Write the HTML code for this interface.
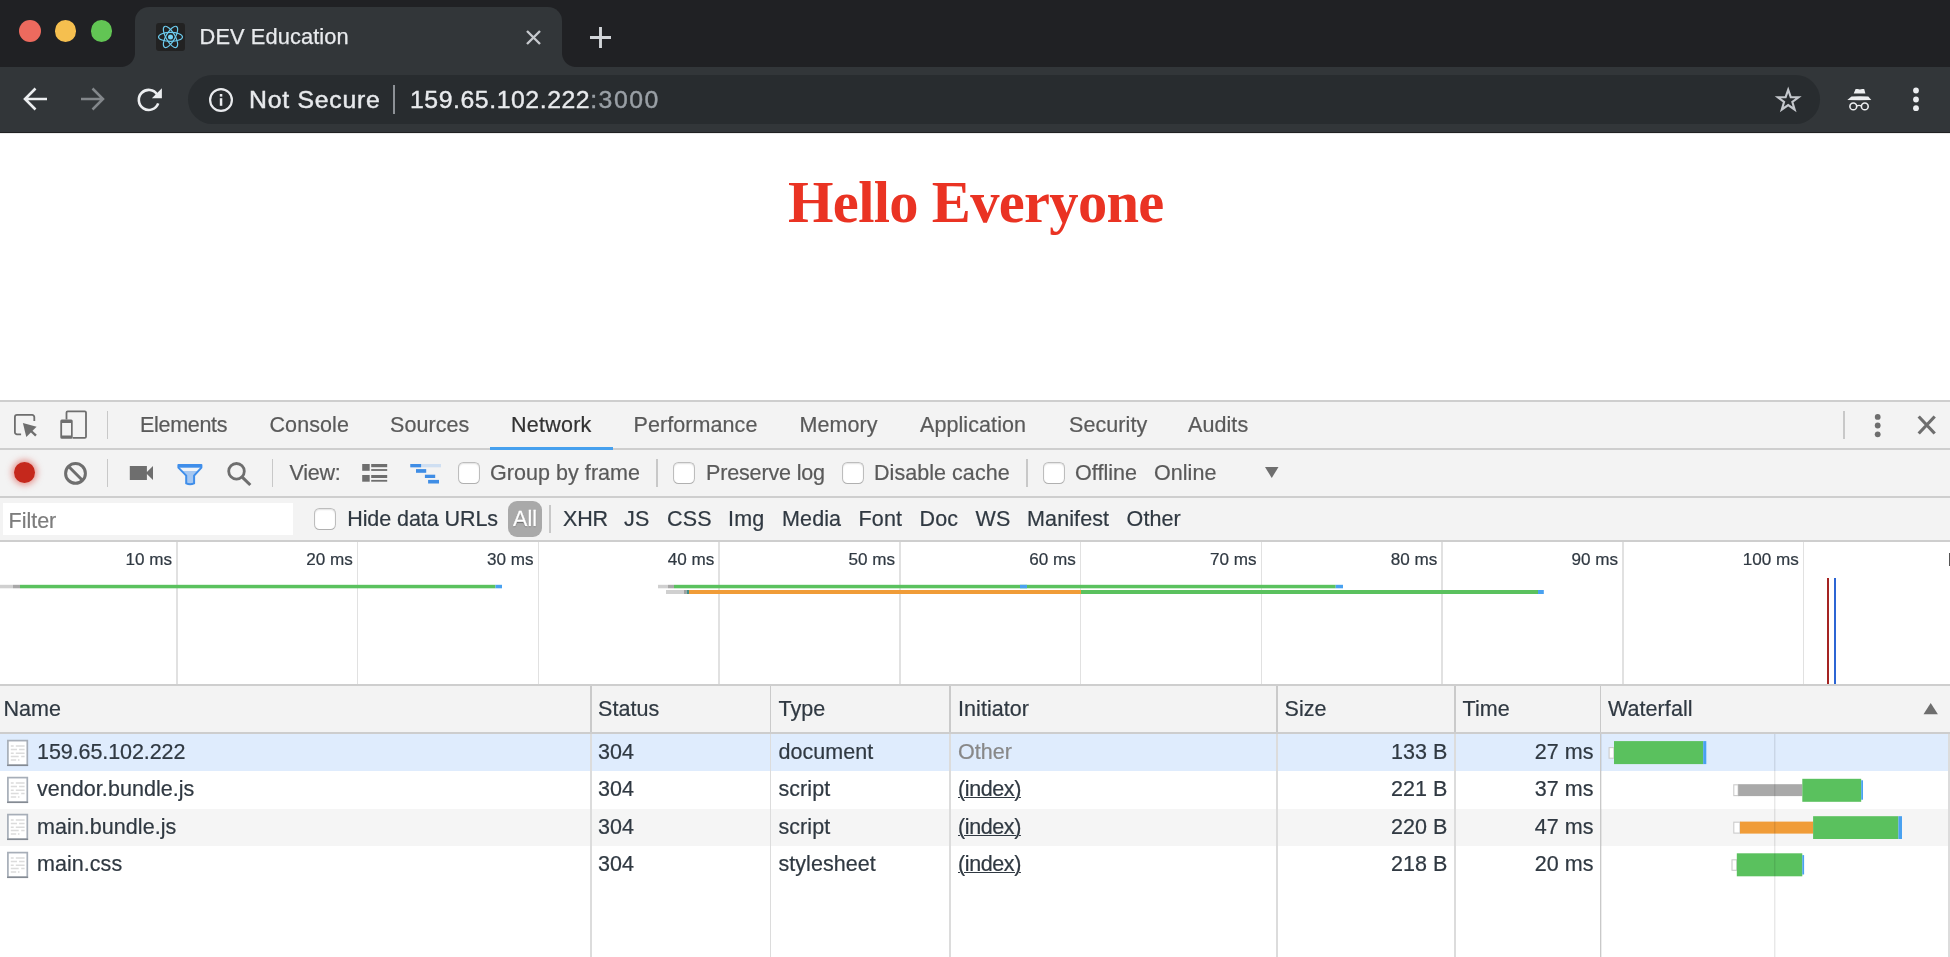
<!DOCTYPE html>
<html><head><meta charset="utf-8"><title>DEV Education</title>
<style>
*{box-sizing:border-box;margin:0;padding:0}
html,body{width:1950px;height:957px;overflow:hidden;background:#fff}
body{font-family:"Liberation Sans",sans-serif;position:relative;color:#303942}
.abs{position:absolute}
.dtab,.lbl,.th,.td,.tick{-webkit-text-stroke:.22px}
.t{position:absolute;white-space:nowrap;line-height:1}
/* chrome */
#frame{position:absolute;left:0;top:0;width:1950px;height:67.2px;background:#202124}
#toolbar{position:absolute;left:0;top:67.1px;width:1950px;height:65.9px;background:#323639;border-bottom:1px solid #202123;box-shadow:0 1px 0 #ececec}
#tab{position:absolute;left:135px;top:6.7px;width:426.5px;height:60.5px;background:#323639;border-radius:14px 14px 0 0}
#tab:before,#tab:after{content:"";position:absolute;bottom:0;width:14px;height:14px;background:radial-gradient(circle at 0 0,#202124 13.5px,#323639 14.5px)}
#tab:before{left:-14px}
#tab:after{right:-14px;background:radial-gradient(circle at 100% 0,#202124 13.5px,#323639 14.5px)}
.tl{position:absolute;top:19.9px;width:21.8px;height:21.8px;border-radius:50%}
#omni{position:absolute;left:188px;top:75px;width:1632px;height:49px;border-radius:25px;background:#282c2f}
/* devtools */
#dt{position:absolute;left:0;top:400px;width:1950px;height:557px;background:#fff}
.bar{position:absolute;left:0;width:1950px;background:#f3f3f3;border-bottom:1.5px solid #ccc}
.dtab{font-size:21.5px;letter-spacing:.08px;color:#5a5a5a}
.lbl{font-size:21.5px;letter-spacing:.1px;color:#5a5a5a}
.cb{position:absolute;width:21.8px;height:21.8px;margin:-.3px 0 0 -.4px;border:1.7px solid #bdbdbd;border-bottom-color:#b0b0b0;border-radius:5.5px;background:#fff;box-shadow:inset 0 1px 1.5px rgba(0,0,0,.12)}
.sep{position:absolute;width:1.5px;background:#c8c8c8}
.hl{position:absolute;left:0;width:1950px;height:1.7px;background:#cecece}
.grid{position:absolute;top:541.5px;width:1.5px;height:143px;background:#e1e1e1}
.tick{font-size:17.1px;color:#303942;text-align:right}
.th{font-size:21.5px;letter-spacing:.06px;color:#303942}
.td{font-size:21.5px;letter-spacing:.05px;color:#303942}
.colsep{position:absolute;top:686px;width:1.6px;height:271px;background:linear-gradient(#cacaca 0,#cacaca 47px,#dcdcdc 47px)}
#wrap{position:absolute;left:0;top:0;width:1950px;height:957px;will-change:transform}
</style></head><body><div id="wrap">
<div id="frame"></div>
<div id="toolbar"></div>
<div id="tab"></div>
<div class="tl" style="left:19.2px;background:#ed6a5e"></div>
<div class="tl" style="left:54.7px;background:#f5bf4f"></div>
<div class="tl" style="left:90.6px;background:#62c554"></div>
<div id="omni"></div>

<!-- favicon -->
<div class="abs" style="left:156px;top:23px;width:29px;height:28px;background:#222;border-radius:3px"></div>
<svg class="abs" style="left:156px;top:23px" width="29" height="28" viewBox="0 0 29 28">
 <g fill="none" stroke="#6ccbee" stroke-width="1.15" transform="translate(14.5 13.9)">
  <ellipse rx="12" ry="4.5"/>
  <ellipse rx="12" ry="4.5" transform="rotate(60)"/>
  <ellipse rx="12" ry="4.5" transform="rotate(120)"/>
 </g>
 <circle cx="14.5" cy="13.9" r="2.5" fill="#74d3f5"/>
</svg>
<div class="t" id="tabtitle" style="-webkit-text-stroke:.25px #e8eaed;left:199.6px;top:26px;font-size:21.8px;letter-spacing:0.1px;color:#e8eaed">DEV Education</div>
<!-- tab close -->
<svg class="abs" style="left:522.5px;top:26.8px" width="21" height="21" viewBox="0 0 21 21"><path d="M4 4L17 17M17 4L4 17" stroke="#c6c9cd" stroke-width="2.4" fill="none"/></svg>
<!-- new tab plus -->
<svg class="abs" style="left:588px;top:25px" width="25" height="25" viewBox="0 0 25 25"><path d="M12.5 2V23M2 12.5H23" stroke="#d2d5d9" stroke-width="2.9" fill="none"/></svg>
<!-- back -->
<svg class="abs" style="left:20.2px;top:83.8px" width="32" height="30" viewBox="0 0 32 30"><path d="M27 15H6.5M15.5 4.5L5 15L15.5 25.5" stroke="#eceef0" stroke-width="2.6" fill="none"/></svg>
<!-- forward -->
<svg class="abs" style="left:76.2px;top:83.8px" width="32" height="30" viewBox="0 0 32 30"><path d="M5 15H25.5M16.5 4.5L27 15L16.5 25.5" stroke="#83878b" stroke-width="2.5" fill="none"/></svg>
<!-- reload -->
<svg class="abs" style="left:133.2px;top:83.8px" width="32" height="32" viewBox="0 0 32 32"><path d="M24.28 10.6A10 10 0 1 0 25.2 19.32" stroke="#eceef0" stroke-width="2.6" fill="none"/><path d="M28.9 4.3V14.3H18.9Z" fill="#eceef0"/></svg>
<!-- info -->
<svg class="abs" style="left:207.3px;top:86.2px" width="28" height="28" viewBox="0 0 28 28"><circle cx="14" cy="14" r="10.9" stroke="#e8eaed" stroke-width="2.2" fill="none"/><rect x="12.8" y="12.2" width="2.5" height="7.6" fill="#e8eaed"/><rect x="12.8" y="8" width="2.5" height="2.6" fill="#e8eaed"/></svg>
<div class="t" id="notsec" style="-webkit-text-stroke:.45px #e8eaed;left:249px;top:88px;font-size:24.8px;letter-spacing:0.75px;color:#e8eaed">Not Secure</div>
<div class="abs" style="left:393px;top:85px;width:1.5px;height:29px;background:#8d9196"></div>
<div class="t" id="url" style="-webkit-text-stroke:.4px;left:410px;top:88px;font-size:24.8px;letter-spacing:0.56px;color:#e8eaed">159.65.102.222<span style="color:#9aa0a6;letter-spacing:1.5px">:3000</span></div>
<!-- star -->
<svg class="abs" style="left:1773px;top:84px" width="30" height="32" viewBox="0 0 30 32"><path d="M15.20 5.75L17.76 13.13L25.57 13.28L19.34 17.99L21.61 25.47L15.20 21.00L8.79 25.47L11.06 17.99L4.83 13.28L12.64 13.13Z" stroke="#c4c7cc" stroke-width="2.15" fill="none" stroke-linejoin="miter"/></svg>
<!-- incognito -->
<svg class="abs" style="left:1845px;top:86px" width="28" height="26" viewBox="0 0 28 26">
 <path d="M10.6 2.9H12.6L14.9 3.5L17.2 2.9H19.2L20.4 7.5H8.7Z" fill="#eceef0"/>
 <path d="M2.3 14L6.5 10.6Q14.9 9.9 23.3 10.6L26.3 14Q14.5 14.3 2.3 14Z" fill="#eceef0"/>
 <circle cx="8.3" cy="20.4" r="3.4" stroke="#eceef0" stroke-width="1.6" fill="none"/>
 <circle cx="19.8" cy="20.4" r="3.4" stroke="#eceef0" stroke-width="1.6" fill="none"/>
 <path d="M11.7 19.9Q14 18.9 16.4 19.9" stroke="#eceef0" stroke-width="1.4" fill="none"/>
</svg>
<!-- kebab -->
<svg class="abs" style="left:1910px;top:86px" width="12" height="28" viewBox="0 0 12 28"><circle cx="6" cy="4.5" r="2.9" fill="#eceef0"/><circle cx="6" cy="13.5" r="2.9" fill="#eceef0"/><circle cx="6" cy="22.2" r="2.9" fill="#eceef0"/></svg>
<!--CHROME-ICONS-->
<h1 class="t" id="hello" style="left:788px;top:174px;font-family:'Liberation Serif',serif;font-weight:bold;font-size:58.5px;letter-spacing:-0.67px;color:#ea3323">Hello Everyone</h1>
<div id="dt"></div>

<div class="abs" style="left:0;top:401px;width:1950px;height:140.5px;background:#f3f3f3"></div>
<div class="hl" style="top:400.4px"></div>
<div class="hl" style="top:448px"></div>
<div class="hl" style="top:496.3px"></div>
<div class="hl" style="top:540.2px"></div>
<!-- tabs -->
<div class="sep" style="left:106.5px;top:411px;height:28px"></div>
<div class="t dtab" style="left:140.0px;top:415px;letter-spacing:-.3px">Elements</div>
<div class="t dtab" style="left:269.5px;top:415px">Console</div>
<div class="t dtab" style="left:390.0px;top:415px">Sources</div>
<div class="t dtab" style="left:511.0px;top:415px;letter-spacing:.25px;color:#333">Network</div>
<div class="abs" style="left:490.4px;top:446.8px;width:122.6px;height:3.2px;background:#46a0ee"></div>
<div class="t dtab" style="left:633.5px;top:415px">Performance</div>
<div class="t dtab" style="left:799.5px;top:415px">Memory</div>
<div class="t dtab" style="left:920.0px;top:415px">Application</div>
<div class="t dtab" style="left:1069.0px;top:415px">Security</div>
<div class="t dtab" style="left:1188.0px;top:415px">Audits</div>
<div class="sep" style="left:1843px;top:411px;height:28px"></div>

<!-- inspect -->
<svg class="abs" style="left:10px;top:408px" width="32" height="32" viewBox="0 0 32 32">
 <path d="M11.1 26.3H7A2.1 2.1 0 0 1 4.9 24.2V9A2.1 2.1 0 0 1 7 6.9H22.2A2.1 2.1 0 0 1 24.3 9V13.1" stroke="#6e6e6e" stroke-width="1.8" fill="none"/>
 <path d="M12.9 15L26.6 18.7L16.3 28.9Z" fill="#6e6e6e"/>
 <path d="M20.5 22.5L26 27.7" stroke="#6e6e6e" stroke-width="2.4" fill="none"/>
</svg>
<!-- device -->
<svg class="abs" style="left:58px;top:408px" width="32" height="32" viewBox="0 0 32 32">
 <path d="M8.5 11.4V4.6A1.2 1.2 0 0 1 9.7 3.45H26.8A1.2 1.2 0 0 1 28 4.6V28.8A1.2 1.2 0 0 1 26.8 29.95H14.7" stroke="#6e6e6e" stroke-width="1.8" fill="none"/>
 <path d="M3.8 11.4H13.2A1.5 1.5 0 0 1 14.7 12.9V29.3A1.5 1.5 0 0 1 13.2 30.8H3.8A1.5 1.5 0 0 1 2.3 29.3V12.9A1.5 1.5 0 0 1 3.8 11.4ZM4.1 15.1V27.5H13V15.1Z" fill="#6e6e6e" fill-rule="evenodd"/>
</svg>
<!-- dt kebab -->
<svg class="abs" style="left:1872px;top:412px" width="12" height="28" viewBox="0 0 12 28"><circle cx="5.7" cy="4.9" r="2.9" fill="#6e6e6e"/><circle cx="5.7" cy="13.5" r="2.9" fill="#6e6e6e"/><circle cx="5.7" cy="22.3" r="2.9" fill="#6e6e6e"/></svg>
<!-- dt close -->
<svg class="abs" style="left:1914px;top:412px" width="26" height="26" viewBox="0 0 26 26"><path d="M4.7 4.5L20.7 21.5M20.7 4.5L4.7 21.5" stroke="#6e6e6e" stroke-width="3.2" fill="none"/></svg>

<!-- toolbar -->
<div class="sep" style="left:106.5px;top:459px;height:28px"></div>
<div class="sep" style="left:271.9px;top:459px;height:28px"></div>
<div class="t lbl" style="left:289.4px;top:463px;letter-spacing:-.2px">View:</div>
<div class="cb" style="left:458.5px;top:462px"></div>
<div class="t lbl" style="left:490px;top:463px;letter-spacing:.05px">Group by frame</div>
<div class="sep" style="left:656px;top:459px;height:28px"></div>
<div class="cb" style="left:673.5px;top:462px"></div>
<div class="t lbl" style="left:706.0px;top:463px;letter-spacing:-.15px">Preserve log</div>
<div class="cb" style="left:842.5px;top:462px"></div>
<div class="t lbl" style="left:874.0px;top:463px;letter-spacing:.05px">Disable cache</div>
<div class="sep" style="left:1026px;top:459px;height:28px"></div>
<div class="cb" style="left:1043.5px;top:462px"></div>
<div class="t lbl" style="left:1075.0px;top:463px;letter-spacing:.05px">Offline</div>
<div class="t lbl" style="left:1154.0px;top:463px;letter-spacing:.05px">Online</div>
<svg class="abs" style="left:1264px;top:466px" width="16" height="13" viewBox="0 0 16 13"><path d="M1 1H14.5L7.75 12Z" fill="#6e6e6e"/></svg>

<!-- record -->
<div class="abs" style="left:14px;top:462px;width:21.2px;height:21.2px;border-radius:50%;background:#c5281c;box-shadow:0 0 6px 2px rgba(215,50,40,.5)"></div>
<!-- clear -->
<svg class="abs" style="left:62px;top:460px" width="27" height="27" viewBox="0 0 27 27"><circle cx="13.5" cy="13.4" r="9.9" stroke="#6e6e6e" stroke-width="3" fill="none"/><path d="M6.6 6.5L20.4 20.3" stroke="#6e6e6e" stroke-width="3" fill="none"/></svg>
<!-- camera -->
<svg class="abs" style="left:128px;top:464px" width="27" height="18" viewBox="0 0 27 18"><path d="M1.8 2.1H18.9V7.9L25 2.1V15.9L18.9 10.1V15.9H1.8Z" fill="#6e6e6e"/></svg>
<!-- filter funnel -->
<svg class="abs" style="left:175px;top:462px" width="30" height="25" viewBox="0 0 30 25">
 <path d="M3.4 3.1H26.4V5.6L19.1 13.6V21.4Q15 23.2 11.2 21.4V13.6L3.4 5.6Z" fill="#f0f3f7"/>
 <path d="M6.3 8.9H23.4L19.1 13.6V21.4Q15 23.2 11.2 21.4V13.6Z" fill="#a6c8f2"/>
 <path d="M3.4 3.1H26.4V5.6L19.1 13.6V21.4Q15 23.2 11.2 21.4V13.6L3.4 5.6Z" stroke="#3f8eea" stroke-width="2" fill="none" stroke-linejoin="round"/>
 <path d="M3.4 4.4H26.4" stroke="#3f8eea" stroke-width="2.6"/>
</svg>
<!-- search -->
<svg class="abs" style="left:224px;top:459px" width="30" height="30" viewBox="0 0 30 30"><circle cx="12.5" cy="12.3" r="7.8" stroke="#6e6e6e" stroke-width="2.8" fill="none"/><path d="M18.2 18.2L26.3 26" stroke="#6e6e6e" stroke-width="3.1" fill="none"/></svg>
<!-- list view -->
<svg class="abs" style="left:360px;top:462px" width="30" height="22" viewBox="0 0 30 22"><g fill="#6e6e6e">
 <rect x="2.2" y="2" width="7.5" height="6.8"/><rect x="11.2" y="2" width="16" height="3.2"/><rect x="11.2" y="7.1" width="16" height="1.8"/>
 <rect x="2.2" y="13" width="7.5" height="6.7"/><rect x="11.2" y="13" width="16" height="3"/><rect x="11.2" y="17.9" width="16" height="1.8"/></g></svg>
<!-- waterfall view -->
<svg class="abs" style="left:408px;top:462px" width="35" height="24" viewBox="0 0 35 24">
 <rect x="2.3" y="2" width="30.7" height="3.3" fill="#cfdff2"/>
 <g fill="#3f8de5"><rect x="2.3" y="2" width="10.8" height="3.3"/><rect x="8" y="7.1" width="10.2" height="3.7"/><rect x="16.9" y="12.7" width="10.3" height="3.3"/><rect x="20.1" y="17.9" width="10.9" height="3.6"/></g></svg>

<!-- filter bar -->
<div class="abs" style="left:3.3px;top:503.3px;width:289.7px;height:31.3px;background:#fff"></div>
<div class="t lbl" style="left:8.5px;top:510.5px;letter-spacing:0;color:#7d7d7d">Filter</div>
<div class="cb" style="left:314.5px;top:508.5px"></div>
<div class="t lbl" style="left:347.2px;top:508.5px;letter-spacing:-.07px;color:#303942">Hide data URLs</div>
<div class="abs" style="left:508px;top:501.1px;width:34px;height:36px;border-radius:9px;background:#a9a9a9"></div>
<div class="t lbl" style="left:513px;top:508.5px;color:#fff;-webkit-text-stroke:.3px #fff;text-shadow:0 1px 1px rgba(0,0,0,.45)">All</div>
<div class="sep" style="left:549.3px;top:505.3px;height:27.4px"></div>
<div class="t lbl" style="left:563.1px;top:508.5px;letter-spacing:-.25px;color:#303942">XHR</div>
<div class="t lbl" style="left:624.1px;top:508.5px;color:#303942">JS</div>
<div class="t lbl" style="left:667.1px;top:508.5px;color:#303942">CSS</div>
<div class="t lbl" style="left:728.1px;top:508.5px;color:#303942">Img</div>
<div class="t lbl" style="left:782.1px;top:508.5px;color:#303942">Media</div>
<div class="t lbl" style="left:858.6px;top:508.5px;color:#303942">Font</div>
<div class="t lbl" style="left:919.6px;top:508.5px;color:#303942">Doc</div>
<div class="t lbl" style="left:975.6px;top:508.5px;color:#303942">WS</div>
<div class="t lbl" style="left:1027.1px;top:508.5px;color:#303942">Manifest</div>
<div class="t lbl" style="left:1126.6px;top:508.5px;color:#303942">Other</div>
<!-- overview -->
<div class="abs" style="left:0;top:542px;width:1950px;height:143px;background:#fff"></div>
<div class="grid" style="left:176.0px"></div>
<div class="t tick" style="left:52.00px;top:551.3px;width:120px">10 ms</div>
<div class="grid" style="left:356.5px"></div>
<div class="t tick" style="left:232.75px;top:551.3px;width:120px">20 ms</div>
<div class="grid" style="left:537.5px"></div>
<div class="t tick" style="left:413.50px;top:551.3px;width:120px">30 ms</div>
<div class="grid" style="left:718.0px"></div>
<div class="t tick" style="left:594.25px;top:551.3px;width:120px">40 ms</div>
<div class="grid" style="left:899.0px"></div>
<div class="t tick" style="left:775.00px;top:551.3px;width:120px">50 ms</div>
<div class="grid" style="left:1079.5px"></div>
<div class="t tick" style="left:955.75px;top:551.3px;width:120px">60 ms</div>
<div class="grid" style="left:1260.5px"></div>
<div class="t tick" style="left:1136.50px;top:551.3px;width:120px">70 ms</div>
<div class="grid" style="left:1441.0px"></div>
<div class="t tick" style="left:1317.25px;top:551.3px;width:120px">80 ms</div>
<div class="grid" style="left:1622.0px"></div>
<div class="t tick" style="left:1498.00px;top:551.3px;width:120px">90 ms</div>
<div class="grid" style="left:1802.5px"></div>
<div class="t tick" style="left:1678.75px;top:551.3px;width:120px">100 ms</div>
<div class="abs" style="left:1948.5px;top:552.5px;width:1.5px;height:13.5px;background:#555"></div>
<svg class="abs" style="left:0;top:580px" width="1950" height="20" viewBox="0 0 1950 20"><rect x="0.0" y="4.8" width="13.0" height="3.5" fill="#d0d0d0"/><rect x="13.0" y="4.8" width="7.0" height="3.5" fill="#a8a8a8"/><rect x="20.0" y="4.8" width="475.5" height="3.5" fill="#5ac15e"/><rect x="495.5" y="4.8" width="6.5" height="3.5" fill="#49a1f0"/><rect x="658.0" y="4.8" width="10.0" height="3.5" fill="#d0d0d0"/><rect x="668.0" y="4.8" width="6.0" height="3.5" fill="#a8a8a8"/><rect x="674.0" y="4.8" width="661.7" height="3.5" fill="#5ac15e"/><rect x="1020.0" y="4.8" width="7.0" height="3.5" fill="#49a1f0"/><rect x="1335.7" y="4.8" width="7.3" height="3.5" fill="#49a1f0"/><rect x="666.0" y="10.0" width="20.0" height="4" fill="#d0d0d0"/><rect x="684.0" y="10.0" width="2.8" height="4" fill="#a0a0a0"/><rect x="686.8" y="10.0" width="2.2" height="4" fill="#3f8f8a"/><rect x="689.0" y="10.0" width="392.0" height="4" fill="#f09c38"/><rect x="1081.0" y="10.0" width="457.0" height="4" fill="#5ac15e"/><rect x="1538.0" y="10.0" width="5.8" height="4" fill="#49a1f0"/></svg>













<div class="abs" style="left:1827.1px;top:578px;width:2px;height:106.5px;background:#a52422"></div>
<div class="abs" style="left:1834.1px;top:578px;width:2px;height:106.5px;background:#2c65d4"></div>
<div class="abs" style="left:0;top:684.3px;width:1950px;height:1.6px;background:#cecece"></div>

<!-- table -->
<div class="abs" style="left:0;top:685.8px;width:1950px;height:46.5px;background:#f3f3f3"></div>
<div class="abs" style="left:0;top:733.8px;width:1950px;height:37.3px;background:#dfecfd"></div>
<div class="abs" style="left:0;top:808.5px;width:1950px;height:37.4px;background:#f5f5f5"></div>
<div class="colsep" style="left:590.0px"></div>
<div class="colsep" style="left:769.5px"></div>
<div class="colsep" style="left:949.0px"></div>
<div class="colsep" style="left:1276.0px"></div>
<div class="colsep" style="left:1454.0px"></div>
<div class="abs" style="left:1599.6px;top:686px;width:1.6px;height:271px;background:#c9c9c9"></div><div class="abs" style="left:1601.2px;top:734px;width:1.3px;height:223px;background:rgba(0,0,0,.07)"></div>
<div class="abs" style="left:1948.4px;top:734px;width:1.6px;height:223px;background:#dcdcdc"></div>
<div class="abs" style="left:0;top:732.2px;width:1950px;height:1.6px;background:#cdcdcd"></div>
<div class="t th" style="left:3.5px;top:698.9px">Name</div>
<div class="t th" style="left:598.0px;top:698.9px">Status</div>
<div class="t th" style="left:778.5px;top:698.9px">Type</div>
<div class="t th" style="left:958.0px;top:698.9px">Initiator</div>
<div class="t th" style="left:1284.5px;top:698.9px">Size</div>
<div class="t th" style="left:1462.5px;top:698.9px">Time</div>
<div class="t th" style="left:1608.0px;top:698.9px">Waterfall</div>
<svg class="abs" style="left:1922px;top:701px" width="18" height="15" viewBox="0 0 18 15"><path d="M1.5 13.3L8.7 1.9L15.9 13.3Z" fill="#6e6e6e"/></svg>
<svg class="abs" style="left:6px;top:738.6px" width="24" height="29" viewBox="0 0 24 29"><rect x="1.9" y="1.6" width="19.4" height="24.6" fill="#fff" stroke="#a7aeb8" stroke-width="1.7"/>
<path d="M1.1 26.3H22.1" stroke="#7e848c" stroke-width="1.5" opacity=".85"/>
<g stroke="#dcdcdc" stroke-width="1.5">
<path d="M4.8 7.1H7.7M9.8 7.1H18.6"/><path d="M4.8 10.5H11M13.1 10.5H18.6"/><path d="M4.8 14.2H7.7M9.8 14.2H18.6"/><path d="M4.8 17.6H12.7M15.2 17.6H18.6"/><path d="M4.8 21.1H10.2M11.9 21.1H13.5"/>
</g></svg>
<div class="t td" style="left:37px;top:741.8px;letter-spacing:-.08px">159.65.102.222</div>
<div class="t td" style="left:598px;top:741.8px">304</div>
<div class="t td" style="left:778.5px;top:741.8px">document</div>
<div class="t td" style="left:958px;top:741.8px;color:#888">Other</div>
<div class="t td" style="left:1327.5px;top:741.8px;width:120px;text-align:right">133 B</div>
<div class="t td" style="left:1473.5px;top:741.8px;width:120px;text-align:right">27 ms</div>
<svg class="abs" style="left:6px;top:775.9px" width="24" height="29" viewBox="0 0 24 29"><rect x="1.9" y="1.6" width="19.4" height="24.6" fill="#fff" stroke="#a7aeb8" stroke-width="1.7"/>
<path d="M1.1 26.3H22.1" stroke="#7e848c" stroke-width="1.5" opacity=".85"/>
<g stroke="#dcdcdc" stroke-width="1.5">
<path d="M4.8 7.1H7.7M9.8 7.1H18.6"/><path d="M4.8 10.5H11M13.1 10.5H18.6"/><path d="M4.8 14.2H7.7M9.8 14.2H18.6"/><path d="M4.8 17.6H12.7M15.2 17.6H18.6"/><path d="M4.8 21.1H10.2M11.9 21.1H13.5"/>
</g></svg>
<div class="t td" style="left:37px;top:779.2px">vendor.bundle.js</div>
<div class="t td" style="left:598px;top:779.2px">304</div>
<div class="t td" style="left:778.5px;top:779.2px">script</div>
<div class="t td" style="left:958px;top:779.2px;letter-spacing:-.4px;text-decoration:underline;text-underline-offset:.6px;text-decoration-thickness:1.3px">(index)</div>
<div class="t td" style="left:1327.5px;top:779.2px;width:120px;text-align:right">221 B</div>
<div class="t td" style="left:1473.5px;top:779.2px;width:120px;text-align:right">37 ms</div>
<svg class="abs" style="left:6px;top:813.3px" width="24" height="29" viewBox="0 0 24 29"><rect x="1.9" y="1.6" width="19.4" height="24.6" fill="#fff" stroke="#a7aeb8" stroke-width="1.7"/>
<path d="M1.1 26.3H22.1" stroke="#7e848c" stroke-width="1.5" opacity=".85"/>
<g stroke="#dcdcdc" stroke-width="1.5">
<path d="M4.8 7.1H7.7M9.8 7.1H18.6"/><path d="M4.8 10.5H11M13.1 10.5H18.6"/><path d="M4.8 14.2H7.7M9.8 14.2H18.6"/><path d="M4.8 17.6H12.7M15.2 17.6H18.6"/><path d="M4.8 21.1H10.2M11.9 21.1H13.5"/>
</g></svg>
<div class="t td" style="left:37px;top:816.6px">main.bundle.js</div>
<div class="t td" style="left:598px;top:816.6px">304</div>
<div class="t td" style="left:778.5px;top:816.6px">script</div>
<div class="t td" style="left:958px;top:816.6px;letter-spacing:-.4px;text-decoration:underline;text-underline-offset:.6px;text-decoration-thickness:1.3px">(index)</div>
<div class="t td" style="left:1327.5px;top:816.6px;width:120px;text-align:right">220 B</div>
<div class="t td" style="left:1473.5px;top:816.6px;width:120px;text-align:right">47 ms</div>
<svg class="abs" style="left:6px;top:850.7px" width="24" height="29" viewBox="0 0 24 29"><rect x="1.9" y="1.6" width="19.4" height="24.6" fill="#fff" stroke="#a7aeb8" stroke-width="1.7"/>
<path d="M1.1 26.3H22.1" stroke="#7e848c" stroke-width="1.5" opacity=".85"/>
<g stroke="#dcdcdc" stroke-width="1.5">
<path d="M4.8 7.1H7.7M9.8 7.1H18.6"/><path d="M4.8 10.5H11M13.1 10.5H18.6"/><path d="M4.8 14.2H7.7M9.8 14.2H18.6"/><path d="M4.8 17.6H12.7M15.2 17.6H18.6"/><path d="M4.8 21.1H10.2M11.9 21.1H13.5"/>
</g></svg>
<div class="t td" style="left:37px;top:854.0px">main.css</div>
<div class="t td" style="left:598px;top:854.0px">304</div>
<div class="t td" style="left:778.5px;top:854.0px">stylesheet</div>
<div class="t td" style="left:958px;top:854.0px;letter-spacing:-.4px;text-decoration:underline;text-underline-offset:.6px;text-decoration-thickness:1.3px">(index)</div>
<div class="t td" style="left:1327.5px;top:854.0px;width:120px;text-align:right">218 B</div>
<div class="t td" style="left:1473.5px;top:854.0px;width:120px;text-align:right">20 ms</div>

<svg class="abs" style="left:1600px;top:734px" width="350" height="223" viewBox="0 0 350 223"><rect x="9.1" y="13.6" width="4.8" height="10.6" fill="#fff" stroke="#cbcbcb" stroke-width="1.1"/><rect x="14.0" y="7.1" width="89.2" height="23.0" fill="#5ac15e"/><rect x="103.2" y="7.1" width="3.1" height="23.0" fill="#49a1f0"/><rect x="133.8" y="50.8" width="4.4" height="10.8" fill="#fff" stroke="#cbcbcb" stroke-width="1.1"/><rect x="138.2" y="50.2" width="64.1" height="11.9" fill="#a9a9a9"/><rect x="202.3" y="44.8" width="58.9" height="23.0" fill="#5ac15e"/><rect x="261.2" y="46.3" width="1.8" height="19.4" fill="#49a1f0"/><rect x="133.8" y="88.2" width="6.2" height="10.9" fill="#fff" stroke="#cbcbcb" stroke-width="1.1"/><rect x="140.0" y="87.6" width="73.1" height="12.0" fill="#f09c38"/><rect x="213.1" y="82.2" width="85.3" height="22.8" fill="#5ac15e"/><rect x="298.4" y="82.2" width="3.6" height="22.8" fill="#49a1f0"/><rect x="132.0" y="125.8" width="4.8" height="10.5" fill="#fff" stroke="#cbcbcb" stroke-width="1.1"/><rect x="136.8" y="119.3" width="65.5" height="23.0" fill="#5ac15e"/><rect x="202.3" y="121.1" width="1.8" height="19.4" fill="#49a1f0"/><rect x="174.1" y="0" width="1.3" height="223" fill="rgba(0,0,0,.1)"/></svg>
</div></body></html>
